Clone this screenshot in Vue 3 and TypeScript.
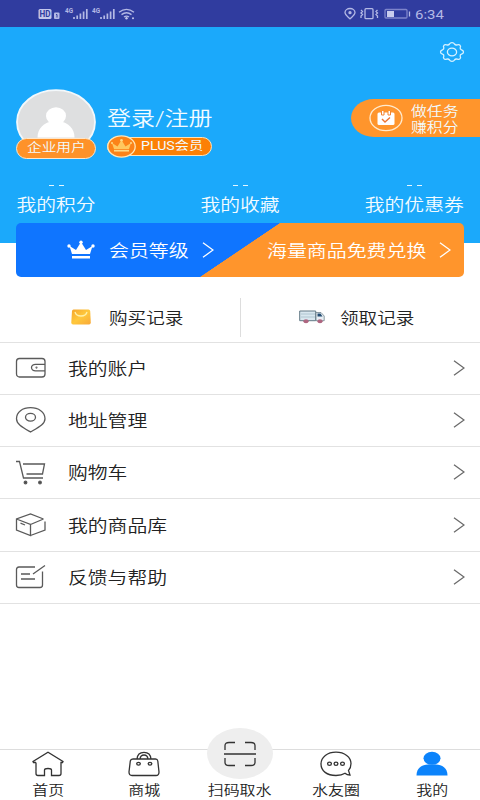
<script setup lang="ts">
interface MenuItem {
  key: string
  label: string
}

const stats: string[] = ['我的积分', '我的收藏', '我的优惠券']

const menu: MenuItem[] = [
  { key: 'wallet', label: '我的账户' },
  { key: 'pin', label: '地址管理' },
  { key: 'cart', label: '购物车' },
  { key: 'box', label: '我的商品库' },
  { key: 'note', label: '反馈与帮助' },
]

const tabs: MenuItem[] = [
  { key: 'home', label: '首页' },
  { key: 'bag', label: '商城' },
  { key: 'scan', label: '扫码取水' },
  { key: 'chat', label: '水友圈' },
  { key: 'me', label: '我的' },
]
</script>

<template>
  <div class="screen">
    <header class="status">
      <svg class="status-left" width="100" height="14" viewBox="0 0 100 14">
        <rect x="0.5" y="2" width="13" height="10" rx="1.5" fill="#c3c7ec" />
        <text x="1.5" y="10.2" font-size="8.5" font-weight="700" textLength="11" lengthAdjust="spacingAndGlyphs" fill="#303c9f">HD</text>
        <rect x="16" y="5.5" width="5.5" height="6.5" rx="1" fill="#b4b9e5" />
        <path d="M18 7.5h1v3" stroke="#303c9f" fill="none" />
        <g v-for="n in 2" :key="n" :transform="`translate(${(n - 1) * 27} 0)`">
          <text x="27" y="6.2" font-size="6.5" font-weight="700" fill="#b4b9e5" textLength="8" lengthAdjust="spacingAndGlyphs">4G</text>
          <path d="M36 12v-2M39.2 12V8.500M42.400 12V6.500M45.600 12V4.500M48.800 12V2" stroke="#b4b9e5" stroke-width="1.7" fill="none" />
        </g>
        <path d="M81 5.200Q88.500-.5 96 5.200M83.500 7.600Q88.500 4 93.500 7.600M86 10Q88.500 8.200 91 10" stroke="#b4b9e5" stroke-width="1.400" fill="none" />
        <circle cx="88.500" cy="11.300" r="1.200" fill="#c3c7ec" />
        <circle cx="95" cy="11.300" r="1" fill="#c3c7ec" />
      </svg>
      <div class="status-right">
        <svg width="68" height="14" viewBox="0 0 68 14" fill="none" stroke="#b4b9e5" stroke-width="1.300">
          <path d="M7 11.800C4 9 2 7.700 2 5.500a5 4 0 0 1 10 0c0 2.200-2 3.500-5 6.300Z" />
          <circle cx="7" cy="5.700" r="1" fill="#b4b9e5" />
          <rect x="22" y="1.700" width="8" height="10" rx="1" />
          <path d="M18 3l1.500 1.500-1.500 1.500 1.500 1.500L18 9v2M34.500 3L33 4.500 34.500 6 33 7.500 34.500 9v2" />
          <rect x="42" y="2.500" width="22" height="8.500" rx="1" stroke="#7d84cb" />
          <rect x="44" y="4" width="7" height="6" fill="#c9ccee" stroke="none" />
          <path d="M66.500 4.500v5" />
        </svg>
        <span class="clock">6:34</span>
      </div>
    </header>

    <section class="hero">
      <svg class="gear" width="26" height="22" viewBox="-13 -11 26 22" fill="none" stroke="#d8f2ff" stroke-width="1.300">
        <path d="M-2.500-8Q-1.800-9.300 0-9.300T2.500-8Q3.500-6.600 5.300-7.200 7.200-7.800 8.100-6.600 9-5.500 8.200-4.300 7.800-2.700 9.500-2.200 11.500-1.600 11.500 0T9.500 2.200Q7.800 2.700 8.200 4.300 9 5.500 8.100 6.600 7.200 7.800 5.300 7.200 3.500 6.600 2.500 8 1.800 9.300 0 9.300T-2.500 8Q-3.500 6.600-5.300 7.200-7.200 7.800-8.100 6.600-9 5.500-8.200 4.300-7.800 2.700-9.500 2.200-11.500 1.600-11.500 0T-9.500-2.200Q-7.800-2.700-8.200-4.300-9-5.500-8.100-6.600-7.200-7.800-5.300-7.200-3.500-6.600-2.500-8Z" />
        <ellipse rx="4.600" ry="3.800" />
      </svg>

      <div class="profile">
        <div class="user">
          <svg width="80" height="62" viewBox="0 0 80 62">
            <ellipse cx="40" cy="34" rx="39" ry="31.800" fill="#dedfe0" stroke="#f3f8fb" stroke-width="1.800" />
            <ellipse cx="40" cy="28" rx="10" ry="8.700" fill="#fff" />
            <path d="M21.500 49.500C21.500 39.500 29 35 33.500 34H46.500C51 35 58.500 39.500 58.500 49.500Z" fill="#fff" />
          </svg>
          <span class="user-tag"><span class="wide mid">企业用户</span></span>
        </div>
        <div class="account">
          <span class="login wide">登录/注册</span>
          <div class="plus">
            <svg width="29" height="23" viewBox="0 0 29 23">
              <ellipse cx="14.500" cy="11.500" rx="13.700" ry="10.600" fill="#fc8318" stroke="#ffe6b8" stroke-width="1.300" />
              <path d="M7 14L5 8l5.500 3.500L14.500 5l4 6.500L24 8l-2 6Z" fill="#ffc75f" />
              <path d="M7 15.700h15" stroke="#ffda87" stroke-width="1.700" />
              <circle cx="14.500" cy="5.300" r="1.300" fill="#ffda87" />
              <circle cx="5" cy="8" r="1" fill="#ffda87" /><circle cx="24" cy="8" r="1" fill="#ffda87" />
            </svg>
            <span class="plus-text wide">PLUS会员</span>
          </div>
        </div>
        <div class="task">
          <svg width="34" height="28" viewBox="0 0 34 28">
            <ellipse cx="17" cy="14" rx="16" ry="12.700" fill="none" stroke="#ffebcf" stroke-width="1.300" />
            <rect x="8.500" y="8.500" width="17" height="12.500" rx="1.500" fill="#fff" />
            <path d="M12.500 7v4h2.500V7M19 7v4h2.500V7" stroke="#f28330" fill="#fff" />
            <path d="M13 15l3 3 5-4.500" stroke="#ed7432" stroke-width="1.400" fill="none" />
          </svg>
          <span class="task-text wide">做任务<br />赚积分</span>
        </div>
      </div>

      <div class="stats">
        <div v-for="s in stats" :key="s" class="stat">
          <span class="dashes"><i></i><i></i></span>
          <span class="wide mid">{{ s }}</span>
        </div>
      </div>
    </section>

    <section class="banner">
      <div class="level">
        <svg width="28" height="20" viewBox="0 0 28 20" fill="#fff">
          <path d="M5 14L2.500 6l6.500 4L14 2l5 8 6.500-4L23 14ZM5 16h18v2.500H5Z" />
          <circle cx="14" cy="2.200" r="1.700" /><circle cx="2" cy="6" r="1.700" /><circle cx="26" cy="6" r="1.700" />
        </svg>
        <span class="wide banner-level">会员等级</span>
        <svg class="arrow" width="12" height="16" viewBox="0 0 12 16"><path d="M1 .7L11 8 1 15.300" /></svg>
      </div>
      <div class="exchange">
        <span class="wide banner-exchange">海量商品免费兑换</span>
        <svg class="arrow" width="12" height="16" viewBox="0 0 12 16"><path d="M1 .7L11 8 1 15.300" /></svg>
      </div>
    </section>

    <section class="records">
      <div class="record bought">
        <svg width="20" height="16" viewBox="0 0 20 16">
          <defs><linearGradient id="bagFill" x1="0" y1="0" x2="1" y2="1"><stop stop-color="#f5a52d" /><stop offset=".5" stop-color="#ffc83c" /><stop offset="1" stop-color="#f8a839" /></linearGradient></defs>
          <path d="M2.500.5h15Q19 .5 19.200 2l.6 11.500Q19.800 15.500 18 15.500H2Q.2 15.500.3 13.500L1 2Q1.200.5 2.500.5Z" fill="url(#bagFill)" />
          <path d="M4 3Q5 7 10 7T16 3" fill="none" stroke="#fff0a8" stroke-width="1.300" />
        </svg>
        <span class="wide">购买记录</span>
      </div>
      <div class="record received">
        <svg width="26" height="14" viewBox="0 0 26 14">
          <path d="M.7 1h16v9.700H.7Z" fill="#d9e7ef" stroke="#627985" />
          <path d="M2 4h14M2 7h14" stroke="#afc5d0" />
          <path d="M17 2.500h5l3.200 3.500v4.700H17Z" fill="#e8eff4" stroke="#70818c" stroke-width=".8" />
          <path d="M18.500 3.500h3l2 3h-5Z" fill="#244d72" />
          <ellipse cx="7" cy="11.300" rx="2.600" ry="2" fill="#ae6680" /><ellipse cx="21" cy="11.300" rx="2.600" ry="2" fill="#ae6680" />
        </svg>
        <span class="wide">领取记录</span>
      </div>
    </section>

    <ul class="menu">
      <li v-for="m in menu" :key="m.key">
        <svg class="menu-icon" width="32" height="28" viewBox="0 0 32 28">
          <g v-if="m.key === 'wallet'"><rect x="1.500" y="4.500" width="28.500" height="18.500" rx="3" /><path d="M30 10.300H20.500a4 3.300 0 0 0 0 6.600H30" /><circle cx="21.500" cy="13.600" r=".4" /></g>
          <g v-else-if="m.key === 'pin'"><path d="M15.500 26C7 21 1.500 18 1.500 12.700 1.500 6 7.500 1.700 15.500 1.700S30 6 30 12.700C30 18 24 21 15.500 26Z" /><ellipse cx="15.500" cy="11.300" rx="5" ry="3.900" /></g>
          <g v-else-if="m.key === 'cart'"><path d="M1 3.500h3.500L8.500 20H28M8 6h21.500L27.500 16H11.500" /><circle cx="10.500" cy="24.500" r="1.300" class="solid" /><circle cx="25" cy="24.500" r="1.300" class="solid" /></g>
          <g v-else-if="m.key === 'box'"><path d="M28.500 8L15.500 3 1.500 8v11L15.500 24.500V13.500L1.500 8M15.500 13.500L28.500 8M30 10.500V19L15.500 24.500M5.500 12.200l4.500 1.800" /></g>
          <g v-else><path d="M20 4H4Q1.500 4 1.500 6.500v15.500Q1.500 24.500 4 24.500H25Q27.500 24.500 27.500 22V8.500M18 11L30 2.500M6 11h9M6 16h14" /></g>
        </svg>
        <span class="wide">{{ m.label }}</span>
        <svg class="chev" width="12" height="16" viewBox="0 0 12 16"><path d="M1 .7L11 8 1 15.300" /></svg>
      </li>
    </ul>

    <nav class="tabs">
      <div v-for="t in tabs" :key="t.key" class="tab" :class="t.key">
        <svg v-if="t.key === 'home'" width="32" height="26" viewBox="0 0 32 26"><path d="M4 11.500V22.500Q4 24.500 6 24.500H12.500V19Q12.500 17.500 16 17.500T19.500 19V24.500H27Q29 24.500 29 22.500V11.500H30.500L31 10.500 16 1.300 1 10.500 1.500 11.500H4" /></svg>
        <svg v-else-if="t.key === 'bag'" width="32" height="26" viewBox="0 0 32 26"><path d="M5 8H27.500Q29.500 8 29.800 10L31 21Q31 24.500 28 24.500H4Q1 24.500 1 21L2.300 10Q2.700 8 5 8ZM9 8Q9.500 1.300 16 1.300T23 8M12 8Q12.500 4 16 4T20 8" /><ellipse cx="10.500" cy="12.700" rx="1.800" ry="1.400" /><ellipse cx="22" cy="12.700" rx="1.800" ry="1.400" /></svg>
        <div v-else-if="t.key === 'scan'" class="scan-disc">
          <svg width="32" height="26" viewBox="0 0 32 26"><path d="M1 9V4.500Q1 1.500 5 1.500h6M21 1.500h6Q31 1.500 31 4.500V9M1 17v4.500Q1 24.500 5 24.500h6M21 24.500h6Q31 24.500 31 21.500V17M0 13h32" /></svg>
        </div>
        <svg v-else-if="t.key === 'chat'" width="32" height="26" viewBox="0 0 32 26"><path d="M25 22.300C22.500 24 19.500 24.500 16 24.500 7 24.500 1 20 1 13S7.500 1.200 16 1.200 31 6 31 12.500C31 15.500 30 18 28.500 19.500L30 24Q27 24 25 22.300Z" /><ellipse cx="9.500" cy="12.700" rx="1.900" ry="1.600" /><ellipse cx="16" cy="12.700" rx="1.900" ry="1.600" /><ellipse cx="22.500" cy="12.700" rx="1.900" ry="1.600" /></svg>
        <svg v-else class="person" width="32" height="26" viewBox="0 0 32 26"><ellipse cx="16" cy="7.300" rx="8.500" ry="6.500" /><path d="M.5 24.500C.5 17 6 13.500 12 13.500H20C26 13.500 31.500 17 31.500 24.500Z" /></svg>
        <span class="wide mid">{{ t.label }}</span>
      </div>
    </nav>
  </div>
</template>

<style>
body {
  background: #fff;
}
</style>

<style scoped>
.screen {
  width: 480px;
  height: 800px;
  display: flex;
  flex-direction: column;
  overflow: hidden;
  background: #fff;
  font-family: Roboto, "Noto Sans CJK SC", sans-serif;
  font-weight: 350;
  color: #222;
}
svg {
  display: block;
  flex: none;
}
/* Labels are set in a horizontally extended face. */
.wide {
  display: inline-block;
  white-space: nowrap;
  transform: scaleX(1.2);
  transform-origin: left center;
}
.wide.mid {
  transform-origin: center;
}
.status {
  height: 27px;
  flex: none;
  box-sizing: border-box;
  display: flex;
  justify-content: space-between;
  align-items: center;
  padding: 1px 0 0 38px;
  background: #303c9f;
}
.status-right {
  display: flex;
  align-items: center;
  width: 137px;
  gap: 4px;
}
.clock {
  font-size: 12.5px;
  font-weight: 400;
  color: #b4b9e5;
  transform: scaleX(1.2);
  transform-origin: left center;
}
.hero {
  height: 216px;
  flex: none;
  box-sizing: border-box;
  padding-top: 14px;
  background: #1ba9fb;
  color: #f2fbff;
}
.gear {
  margin-left: 439px;
}
.profile {
  display: flex;
  height: 74px;
  margin-top: 25px;
  padding-left: 16px;
}
.user {
  width: 80px;
  display: flex;
  flex-direction: column;
}
.user-tag {
  display: flex;
  justify-content: center;
  align-items: center;
  box-sizing: border-box;
  height: 20.500px;
  margin-top: -12px;
  position: relative;
  border: 1.300px solid #ffe6c8;
  border-radius: 12px;
  background: #fe9229;
  font-size: 12.200px;
  line-height: 18px;
  flex: none;
}
.account {
  margin-left: 11px;
  padding-top: 17px;
  width: 105px;
}
.login {
  font-size: 20px;
  line-height: 28px;
}
.plus {
  display: flex;
  align-items: center;
  height: 19px;
  box-sizing: border-box;
  margin-top: 4px;
  border: 1px solid #ffe2b6;
  border-radius: 10px;
  background: #fc8005;
}
.plus svg {
  margin-left: -1px;
}
.plus-text {
  margin-left: 5px;
  font-size: 12px;
  line-height: 17px;
  font-weight: 400;
  transform: scaleX(1.18);
}
.task {
  margin-left: auto;
  margin-top: 11px;
  width: 129px;
  height: 38px;
  box-sizing: border-box;
  display: flex;
  align-items: center;
  padding-left: 18px;
  border-radius: 23px 0 0 23px / 19px 0 0 19px;
  background: #ff952c;
}
.task-text {
  margin-left: 8px;
  padding-top: 3px;
  font-size: 13.200px;
  line-height: 16px;
}
.stats {
  display: flex;
  justify-content: space-between;
  margin-top: 18px;
  padding: 0 16px;
  font-size: 16.500px;
  line-height: 24px;
}
.stat {
  display: flex;
  flex-direction: column;
  align-items: center;
  width: 80px;
}
.stat:last-child {
  width: 100px;
}
.stat:nth-child(2) {
  margin-left: 20px;
}
.dashes {
  display: flex;
  gap: 5px;
  padding: 5px 0 8px;
}
.dashes i {
  width: 5px;
  height: 1px;
  background: #e4f6ff;
}
.banner {
  display: flex;
  justify-content: space-between;
  height: 54px;
  flex: none;
  margin: -20px 16px 0;
  border-radius: 5px;
  color: #fff;
  background: linear-gradient(to bottom right, #0f75ff 49.700%, #ff952c 50.300%) 184px 0 / 80px 100% no-repeat,
    linear-gradient(to right, #0f75ff 184px, #ff952c 184px);
  font-size: 16.600px;
  position: relative;
}
.level {
  display: flex;
  align-items: center;
  padding-left: 51px;
}
.exchange {
  display: flex;
  align-items: center;
  padding-right: 13px;
}
.banner-level {
  margin-left: 14px;
  width: 93px;
}
.banner-exchange {
  width: 172px;
}
.arrow,
.chev {
  fill: none;
  stroke: #fff;
  stroke-width: 1.300;
}
.records {
  display: flex;
  height: 64.500px;
  flex: none;
  font-size: 15.500px;
}
.record {
  width: 240px;
  display: flex;
  align-items: center;
  margin: 21px 0 5px;
  box-sizing: border-box;
}
.record .wide {
  margin-top: -1px;
}
.bought {
  padding-left: 71px;
  gap: 18px;
}
.received {
  padding-left: 58px;
  gap: 15px;
  border-left: 1px solid #ddd;
}
.menu {
  list-style: none;
  margin: 0;
  padding: 0;
  border-top: 1.500px solid #e2e2e2;
  font-size: 16.500px;
}
.menu li {
  display: flex;
  align-items: center;
  height: 52.300px;
  box-sizing: border-box;
  padding: 0 15px 1px;
  border-bottom: 1.500px solid #e2e2e2;
}
.menu-icon {
  margin-right: 21px;
  fill: none;
  stroke: #5a5a5a;
  stroke-width: 1.300;
}
.solid {
  fill: #444;
}
.chev {
  margin-left: auto;
  stroke: #6a6a6a;
}
.tabs {
  display: grid;
  grid-template-columns: repeat(5, 1fr);
  height: 51px;
  box-sizing: border-box;
  margin-top: auto;
  border-top: 1px solid #ddd;
  font-size: 13.300px;
  line-height: 18px;
}
.tab {
  display: flex;
  flex-direction: column;
  align-items: center;
  padding-top: 1px;
}
.tab svg {
  fill: none;
  stroke: #333;
  stroke-width: 1.300;
}
.tab .wide {
  margin-top: 5px;
}
.scan-disc {
  display: flex;
  align-items: center;
  justify-content: center;
  width: 66px;
  height: 51px;
  margin-top: -23px;
  margin-bottom: -2px;
  border-radius: 50%;
  background: #eee;
}
.tab .person {
  fill: #0b83fb;
  stroke: none;
}
</style>
